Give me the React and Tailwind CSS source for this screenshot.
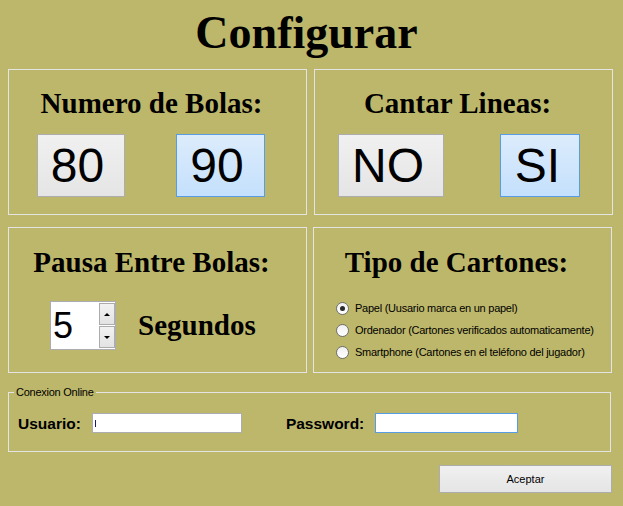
import React from "react";

function Radio({ checked, label }) {
  return (
    <div className="flex h-[22px] items-center pl-[22px]">
      <div className="flex h-[13px] w-[13px] items-center justify-center rounded-full border border-[#6f6f6f] bg-linear-to-b from-[#f0f0f0] to-[#ffffff]">
        {checked ? <div className="h-[5px] w-[5px] rounded-full bg-[#2a2a2a]" /> : null}
      </div>
      <span className="ml-[6px] text-[11px] leading-[13px] tracking-[-0.25px] text-black">{label}</span>
    </div>
  );
}

function Heading({ children }) {
  return (
    <div className="pr-[12px] text-center font-['Liberation_Serif',serif] text-[29px] font-bold leading-[29px] text-black">
      {children}
    </div>
  );
}

export default function App() {
  return (
    <div className="h-[506px] w-[623px] overflow-hidden bg-[#bdb76b] font-['Liberation_Sans',Arial,sans-serif] text-black">
      <div className="h-[69px] pr-[10px] pt-[10px] text-center font-['Liberation_Serif',serif] text-[46px] font-bold leading-[46px]">
        Configurar
      </div>

      <div className="flex gap-[7px] pl-[8px]">
        <div className="h-[146px] w-[299px] border border-[#e4e4e4] pt-[19px]">
          <Heading>Numero de Bolas:</Heading>
          <div className="mt-[16px] flex pl-[28px]">
            <div className="flex h-[63px] w-[88px] items-center justify-center border border-[#adadad] bg-linear-to-b from-[#f0f0f0] to-[#e5e5e5] pr-[7px] text-[48px] leading-none">
              80
            </div>
            <div className="ml-[51px] flex h-[63px] w-[89px] items-center justify-center border border-[#569de5] bg-linear-to-b from-[#dcecfc] to-[#c4e0fc] pr-[7px] text-[48px] leading-none">
              90
            </div>
          </div>
        </div>
        <div className="h-[146px] w-[299px] border border-[#e4e4e4] pt-[19px]">
          <Heading>Cantar Lineas:</Heading>
          <div className="mt-[16px] flex pl-[23px]">
            <div className="flex h-[63px] w-[106px] items-center justify-center border border-[#adadad] bg-linear-to-b from-[#f0f0f0] to-[#e5e5e5] pr-[6px] text-[48px] leading-none">
              NO
            </div>
            <div className="ml-[56px] flex h-[63px] w-[80px] items-center justify-center border border-[#569de5] bg-linear-to-b from-[#dcecfc] to-[#c4e0fc] pr-[5px] text-[48px] leading-none">
              SI
            </div>
          </div>
        </div>
      </div>

      <div className="mt-[12px] flex gap-[6px] pl-[8px]">
        <div className="h-[146px] w-[299px] border border-[#e4e4e4] pt-[20px]">
          <Heading>Pausa Entre Bolas:</Heading>
          <div className="mt-[24px] flex items-center pl-[41px]">
            <div className="flex h-[49px] w-[66px] border border-[#abadb3] bg-white">
              <div className="flex flex-1 items-center pl-[2px] text-[36px] leading-none">5</div>
              <div className="flex w-[16px] flex-col gap-[1px] py-[1px]">
                <div className="flex flex-1 items-center justify-center border border-[#acacac] bg-linear-to-b from-[#f2f2f2] to-[#e3e3e3]">
                  <div className="h-0 w-0 border-x-[3px] border-b-[3px] border-x-transparent border-b-black" />
                </div>
                <div className="flex flex-1 items-center justify-center border border-[#acacac] bg-linear-to-b from-[#f2f2f2] to-[#e3e3e3]">
                  <div className="h-0 w-0 border-x-[3px] border-t-[3px] border-x-transparent border-t-black" />
                </div>
              </div>
            </div>
            <div className="ml-[22px] font-['Liberation_Serif',serif] text-[29px] font-bold leading-[29px]">
              Segundos
            </div>
          </div>
        </div>
        <div className="h-[146px] w-[299px] border border-[#e4e4e4] pt-[20px]">
          <Heading>Tipo de Cartones:</Heading>
          <div className="mt-[20px] flex flex-col">
            <Radio checked label="Papel (Uusario marca en un papel)" />
            <Radio label="Ordenador (Cartones verificados automaticamente)" />
            <Radio label="Smartphone (Cartones en el teléfono del jugador)" />
          </div>
        </div>
      </div>

      <fieldset className="ml-[8px] mt-[13px] w-[603px] border border-[#e4e4e4] px-[5px] pb-[18px]">
        <legend className="px-[2px] text-[11px] leading-[13px] tracking-[-0.25px]">Conexion Online</legend>
        <div className="mt-[14px] flex items-center pl-[4px]">
          <span className="text-[15.5px] font-bold leading-[17px]">Usuario:</span>
          <div className="ml-[11px] flex h-[20px] w-[150px] items-center border border-[#abadb3] bg-white pl-[2px]">
            <div className="h-[7px] w-px bg-[#1a1a6a]" />
          </div>
          <span className="ml-[44px] text-[15.5px] font-bold leading-[17px]">Password:</span>
          <div className="ml-[11px] h-[20px] w-[143px] border border-[#569de5] bg-white" />
        </div>
      </fieldset>

      <div className="ml-[439px] mt-[13px] flex h-[28px] w-[173px] items-center justify-center border border-[#adadad] bg-linear-to-b from-[#f0f0f0] to-[#e5e5e5] text-[11px]">
        Aceptar
      </div>
    </div>
  );
}
